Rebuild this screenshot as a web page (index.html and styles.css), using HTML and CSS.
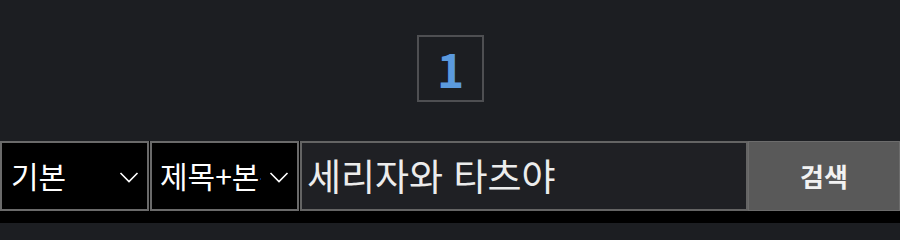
FILE: index.html
```html
<!DOCTYPE html>
<html lang="ko">
<head>
<meta charset="utf-8">
<link rel="stylesheet" href="styles.css">
</head>
<body>
<div class="pager">
  <span class="page current">1</span>
</div>
<form class="search">
  <div class="select sel-a">
    <span class="sel-text">기본</span>
    <svg class="chev" viewBox="0 0 20 11" width="20" height="11"><polyline points="1.5,1 10,9.5 18.5,1" fill="none" stroke="#fff" stroke-width="1.6"/></svg>
  </div>
  <div class="select sel-b">
    <span class="sel-text">제목+본문</span>
    <svg class="chev" viewBox="0 0 20 11" width="20" height="11"><polyline points="1.5,1 10,9.5 18.5,1" fill="none" stroke="#fff" stroke-width="1.6"/></svg>
  </div>
  <div class="query">세리자와 타츠야</div>
  <div class="btn">검색</div>
</form>
</body>
</html>
```

FILE: styles.css
```css
html, body {
  margin: 0;
  padding: 0;
  background: #1c1e22;
  font-family: "Noto Sans CJK KR", "Noto Sans", sans-serif;
  width: 900px;
  height: 233px;
  overflow: hidden;
}

.pager {
  display: flex;
  justify-content: center;
  padding-top: 35px;
  padding-left: 1px;
}

.page {
  box-sizing: border-box;
  width: 67px;
  height: 67px;
  border: 2px solid #4e4f52;
  display: flex;
  align-items: center;
  justify-content: center;
  color: #5b9ade;
  font-family: "Noto Sans CJK KR", "Noto Sans", sans-serif;
  font-weight: 700;
  font-size: 46px;
  line-height: 1;
  padding-bottom: 1px;
}

.search {
  margin: 39px 0 0 0;
  display: flex;
  gap: 1px;
  background: #000;
  padding-bottom: 12px;
  height: 70px;
}

.select {
  box-sizing: border-box;
  width: 149px;
  height: 70px;
  border: 2px solid #6a6a6a;
  background: #000;
  color: #fff;
  display: flex;
  align-items: center;
  padding: 0 8px 0 9px;
  font-size: 30px;
}

.sel-text {
  flex: 1;
  white-space: nowrap;
  overflow: hidden;
  padding-bottom: 2px;
}

.sel-b .sel-text {
  flex: 0 0 101px;
}

.sel-b {
  justify-content: space-between;
  padding-left: 8px;
}

.chev {
  flex: none;
  margin-top: 2px;
}

.query {
  box-sizing: border-box;
  flex: 1;
  height: 70px;
  border: 2px solid #646464;
  background: #1f2024;
  color: #ececec;
  font-size: 37px;
  display: flex;
  align-items: center;
  padding: 0 0 2px 5px;
  white-space: nowrap;
}

.btn {
  box-sizing: border-box;
  width: 152px;
  height: 70px;
  margin-left: -1px;
  background: #595959;
  border: 1px solid #6c6c6c;
  color: #f2f2f2;
  font-weight: 700;
  font-size: 26px;
  display: flex;
  align-items: center;
  justify-content: center;
  padding-bottom: 2px;
}
```
